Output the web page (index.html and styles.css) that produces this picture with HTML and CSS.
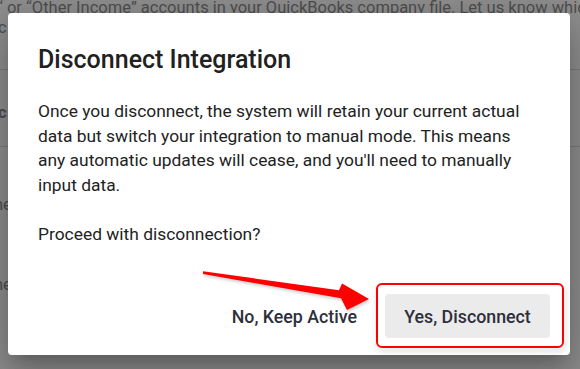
FILE: index.html
```html
<!DOCTYPE html>
<html>
<head>
<meta charset="utf-8">
<link rel="stylesheet" href="styles.css">
</head>
<body>
<div class="page">
  <div class="bg-row bg-first">&ldquo; or &ldquo;Other Income&rdquo; accounts in your QuickBooks company file. Let us know which</div>
  <div class="bg-row bg-split"><span>c</span><span>g,</span></div>
  <div class="bg-line"></div>
  <div class="bg-row bg-bold">c</div>
  <div class="bg-line"></div>
  <div class="bg-row bg-item">ne</div>
  <div class="bg-row bg-item">ne</div>
</div>

<div class="overlay">
  <div class="dialog">
    <h2 class="title">Disconnect Integration</h2>
    <div class="content">
      <p>Once you disconnect, the system will retain your current actual data but switch your integration to manual mode. This means any automatic updates will cease, and you'll need to manually input data.</p>
      <p>Proceed with disconnection?</p>
    </div>
    <div class="actions">
      <button class="btn btn-text">No, Keep Active</button>
      <button class="btn btn-primary">Yes, Disconnect<span class="highlight"></span></button>
    </div>
  </div>
  <svg class="arrow" width="580" height="369" viewBox="0 0 580 369">
    <polygon points="203,271.3 339,290.2 342,283.5 369,299 347,310 341,298.2 203,274" fill="#ff0000"/>
  </svg>
</div>
</body>
</html>
```
FILE: styles.css
```css
html, body {
  margin: 0;
  padding: 0;
}
body {
  width: 580px;
  height: 369px;
  overflow: hidden;
  background: #8e8e8e;
  font-family: Roboto, "Liberation Sans", sans-serif;
  position: relative;
}
.page {
  color: #4e4e4e;
  font-size: 16.5px;
  width: 580px;
  overflow: hidden;
}
.bg-row {
  white-space: nowrap;
  height: 20px;
  line-height: 20px;
}
.bg-first {
  margin-top: -2px;
  margin-left: -3px;
}
.bg-split {
  display: flex;
  justify-content: space-between;
  padding-right: 35px;
  margin-left: -2px;
}
.bg-line {
  height: 1px;
  background: #7c7c7c;
  margin-top: 31px;
}
.bg-bold {
  font-weight: 700;
  margin-top: 33px;
  margin-left: -2px;
}
.bg-line + .bg-bold + .bg-line {
  margin-top: 23px;
}
.bg-item {
  margin-left: -6px;
  margin-top: 48px;
}
.bg-item + .bg-item {
  margin-top: 60px;
}
.overlay {
  position: absolute;
  inset: 0;
  padding: 13px 10px 0 8px;
}
.dialog {
  width: 562px;
  height: 342px;
  box-sizing: border-box;
  background: #fff;
  border-radius: 4px;
  box-shadow: 0 11px 15px -7px rgba(0,0,0,.2), 0 24px 38px 3px rgba(0,0,0,.14), 0 9px 46px 8px rgba(0,0,0,.12);
  padding: 31px 20px 17px 30px;
  display: flex;
  flex-direction: column;
}
.title {
  margin: 0;
  font-size: 25px;
  font-weight: 500;
  line-height: 32px;
  color: #212121;
}
.content {
  margin-top: 23px;
  padding-right: 12px;
  font-size: 17.4px;
  line-height: 24.5px;
  color: #222;
  flex: 1;
}
.content p {
  margin: 0 0 25px 0;
}
.actions {
  display: flex;
  justify-content: flex-end;
  align-items: center;
  gap: 16px;
}
.btn {
  font-family: Roboto, "Liberation Sans", sans-serif;
  font-size: 17.8px;
  font-weight: 500;
  color: #2d2f3b;
  border: none;
  background: transparent;
  height: 44px;
  border-radius: 4px;
  padding: 0 19px;
  position: relative;
}
.btn-text {
  padding: 0 12px;
}
.btn-primary {
  background: #ebebeb;
  width: 165px;
}
.highlight {
  position: absolute;
  left: -9px;
  top: -11px;
  right: -14px;
  bottom: -10px;
  border: 2px solid #f00;
  border-radius: 6px;
  box-shadow: 0 0 4px 2px rgba(255,255,255,.9), 1px 2px 6px rgba(0,0,0,.25);
}
.arrow {
  position: absolute;
  left: 0;
  top: 0;
  filter: drop-shadow(1px 2px 1.5px rgba(0,0,0,.2));
}
```
